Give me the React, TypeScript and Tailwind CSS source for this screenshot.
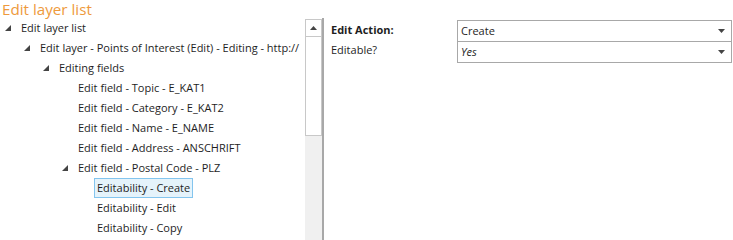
import React from "react";

type Row = { label: string; level: number; expanded?: boolean; selected?: boolean };

const rows: Row[] = [
  { label: "Edit layer list", level: 0, expanded: true },
  { label: "Edit layer - Points of Interest (Edit) - Editing - http://", level: 1, expanded: true },
  { label: "Editing fields", level: 2, expanded: true },
  { label: "Edit field - Topic - E_KAT1", level: 3 },
  { label: "Edit field - Category - E_KAT2", level: 3 },
  { label: "Edit field - Name - E_NAME", level: 3 },
  { label: "Edit field - Address - ANSCHRIFT", level: 3 },
  { label: "Edit field - Postal Code - PLZ", level: 3, expanded: true },
  { label: "Editability - Create", level: 4, selected: true },
  { label: "Editability - Edit", level: 4 },
  { label: "Editability - Copy", level: 4 },
];

const font = { fontFamily: '"Open Sans", "Noto Sans", sans-serif' };

const Expander = () => (
  <svg width="6" height="6" viewBox="0 0 6 6" className="shrink-0">
    <polygon points="6,0 6,6 0,6" fill="#444" />
  </svg>
);

const Caret = () => (
  <svg width="7" height="4" viewBox="0 0 7 4">
    <polygon points="0,0 7,0 3.5,4" fill="#444" />
  </svg>
);

const TreeRow = ({ row }: { row: Row }) => (
  <div className="flex h-5 items-center" style={{ paddingLeft: 5 + row.level * 19 }}>
    <div className="flex w-[13px] shrink-0 items-center">{row.expanded && <Expander />}</div>
    <span
      className={
        row.selected
          ? "shrink-0 whitespace-nowrap border border-[#84c5ee] bg-[#e5f3fb] px-[2px] leading-[18px]"
          : "shrink-0 whitespace-nowrap px-[3px] leading-[18px]"
      }
    >
      {row.label}
    </span>
  </div>
);

const Select = ({ value, italic }: { value: string; italic?: boolean }) => (
  <div className="flex h-5 items-center justify-between pl-[3px] pr-[6px]">
    <span className={italic ? "italic" : ""}>{value}</span>
    <Caret />
  </div>
);

export default function App() {
  return (
    <div className="h-[240px] w-[733px] overflow-hidden bg-white text-[11px] text-[#1e1e1e]" style={font}>
      <div className="h-[18px] pl-[2px] text-[15.2px] leading-[18px] text-[#ee9a3c]">Edit layer list</div>
      <div className="flex h-[222px]">
        {/* tree */}
        <div className="w-[305px] overflow-hidden">
          {rows.map((r) => (
            <TreeRow key={r.label} row={r} />
          ))}
        </div>

        {/* scrollbar */}
        <div className="flex w-[17px] flex-col pt-px">
          <div className="flex h-[18px] items-center justify-center border border-[#c8c8c8] bg-white">
            <svg width="7" height="4" viewBox="0 0 7 4">
              <polygon points="3.5,0 7,4 0,4" fill="#444" />
            </svg>
          </div>
          <div className="h-[99px] border border-t-0 border-[#c8c8c8] bg-white" />
          <div className="flex-1 bg-[#f0f0f0]" />
        </div>
        <div className="w-[2px] bg-[#a8a8a8]" />

        {/* properties */}
        <div className="flex flex-1 flex-col pl-[7px] pt-[2px] pr-[1px]">
          <div className="flex">
            <div className="w-[126px]">
              <div className="flex h-5 items-center font-bold">Edit Action:</div>
              <div className="flex h-5 items-center">Editable?</div>
            </div>
            <div className="flex-1 border border-[#a8a8a8]">
              <Select value="Create" />
              <div className="border-t border-[#a8a8a8]">
                <Select value="Yes" italic />
              </div>
            </div>
          </div>
        </div>
      </div>
    </div>
  );
}
